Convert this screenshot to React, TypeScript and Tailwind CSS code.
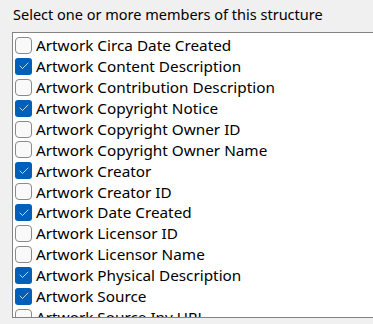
import { Check } from 'lucide-react';

const members = [
    { label: 'Artwork Circa Date Created', checked: false },
    { label: 'Artwork Content Description', checked: true },
    { label: 'Artwork Contribution Description', checked: false },
    { label: 'Artwork Copyright Notice', checked: true },
    { label: 'Artwork Copyright Owner ID', checked: false },
    { label: 'Artwork Copyright Owner Name', checked: false },
    { label: 'Artwork Creator', checked: true },
    { label: 'Artwork Creator ID', checked: false },
    { label: 'Artwork Date Created', checked: true },
    { label: 'Artwork Licensor ID', checked: false },
    { label: 'Artwork Licensor Name', checked: false },
    { label: 'Artwork Physical Description', checked: true },
    { label: 'Artwork Source', checked: true },
    { label: 'Artwork Source Inv URL', checked: false },
];

function Box({ checked }: { checked: boolean }) {
    return checked ? (
        <span className="w-[17px] h-[17px] rounded-[3px] bg-[#005fb8] flex items-center justify-center flex-shrink-0">
            <Check className="w-[12px] h-[12px] text-white" strokeWidth={1.5} />
        </span>
    ) : (
        <span className="w-[17px] h-[17px] rounded-[4px] border border-[#8a8a8a] bg-[#f9f9f9] flex-shrink-0" />
    );
}

export default function App() {
    return (
        <div className="w-[373px] h-[324px] bg-[#f0f0f0] overflow-hidden font-['Noto_Sans',sans-serif] text-black">
            {/* Caption */}
            <div className="pl-[13px] pt-[3px] h-[32px] leading-[22px] text-[14.5px]">Select one or more members of this structure</div>

            {/* Member list */}
            <div className="ml-[12px] w-[380px] h-[286px] border border-[#838383] bg-white overflow-hidden pt-[2px] text-[15.3px]">
                {members.map((m) => (
                    <div key={m.label} className="flex items-center gap-[4px] h-[20.9px] pl-[2px] whitespace-nowrap">
                        <Box checked={m.checked} />
                        <span className="leading-none pt-[1px]">{m.label}</span>
                    </div>
                ))}
            </div>
        </div>
    );
}
